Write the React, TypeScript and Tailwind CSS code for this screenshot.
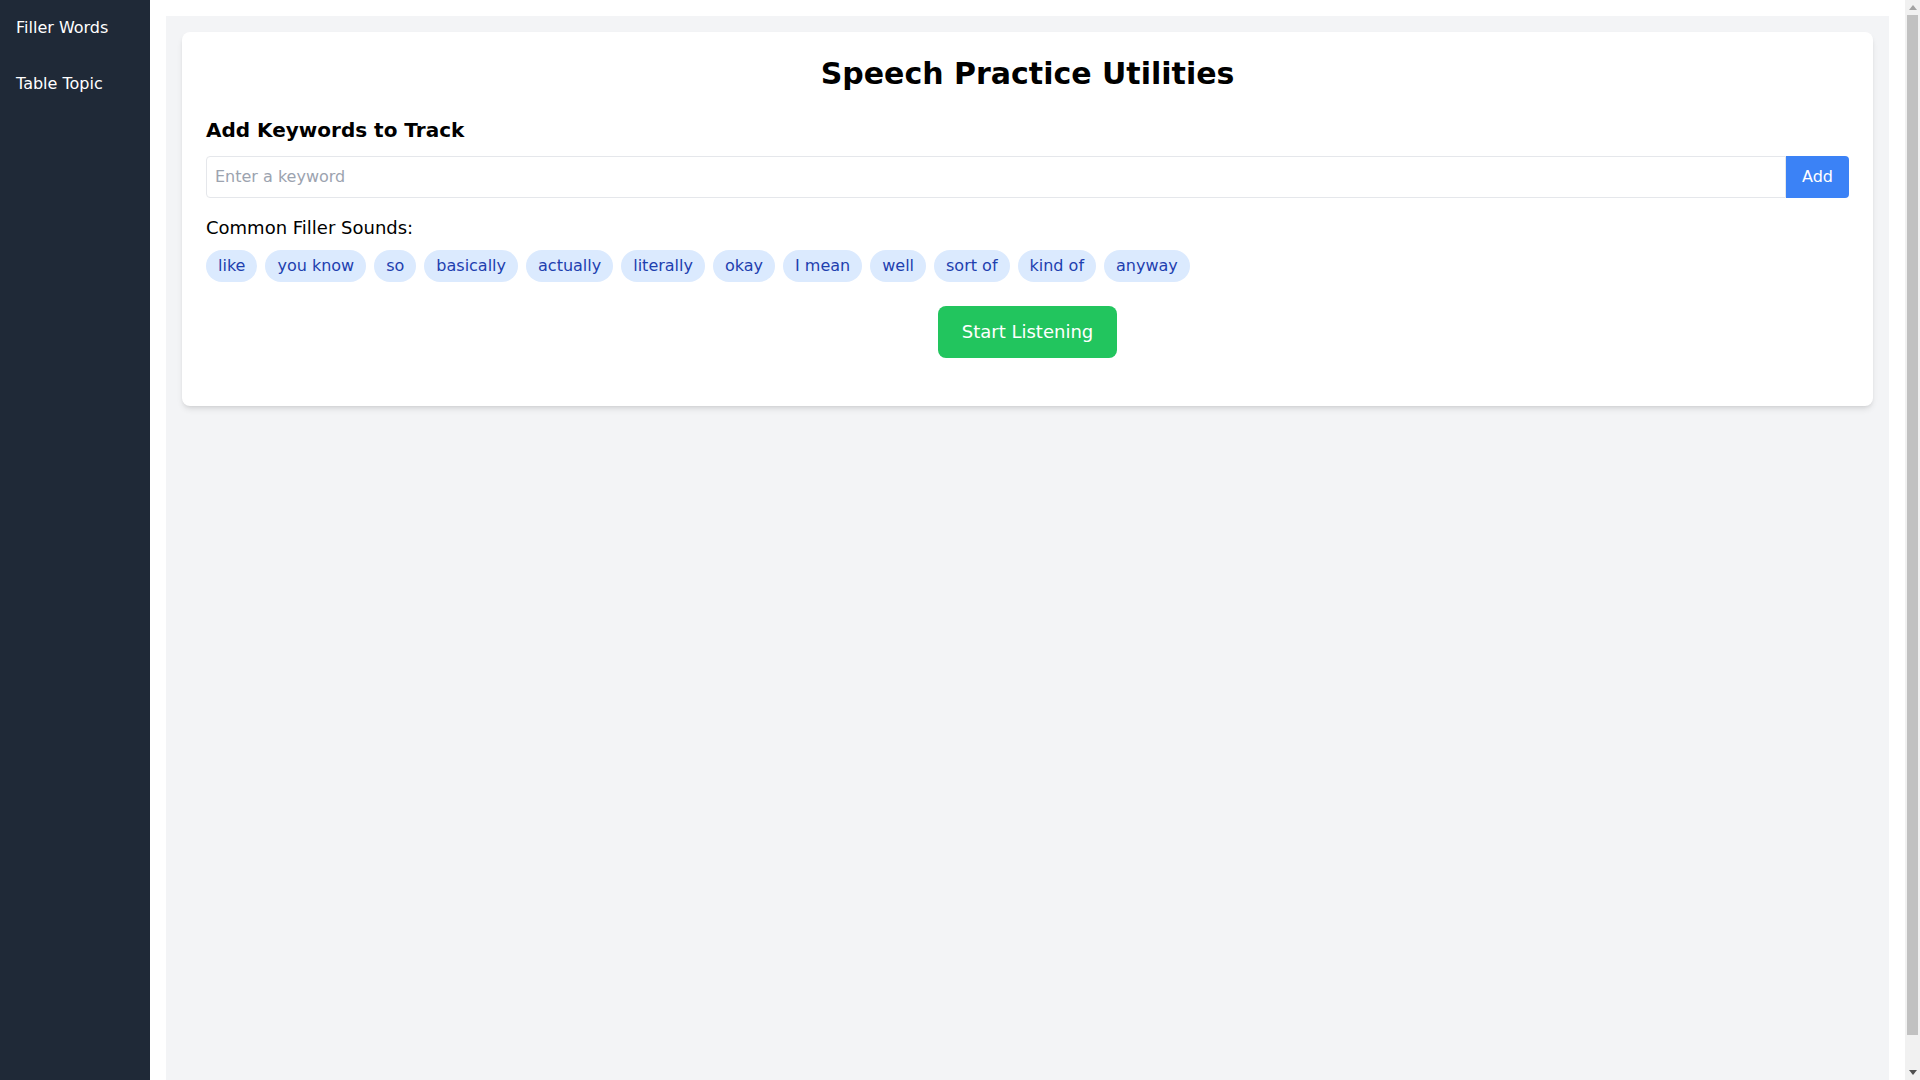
import React from "react";

const fillers = ["like", "you know", "so", "basically", "actually", "literally", "okay", "I mean", "well", "sort of", "kind of", "anyway"];

function FakeScrollbar() {
  return (
    <div className="fixed right-0 top-0 flex h-screen w-[15px] flex-col items-center bg-[#f1f1f1]">
      <div className="flex h-[15px] w-full items-center justify-center">
        <svg width="8" height="5" viewBox="0 0 8 5">
          <path d="M0 5 L4 0 L8 5 Z" fill="#a3a3a3" />
        </svg>
      </div>
      <div className="h-[1020px] w-[11px] bg-[#c1c1c1]" />
      <div className="flex-1" />
      <div className="flex h-[15px] w-full items-center justify-center">
        <svg width="8" height="5" viewBox="0 0 8 5">
          <path d="M0 0 L8 0 L4 5 Z" fill="#505050" />
        </svg>
      </div>
    </div>
  );
}

export default function App() {
  return (
    <div className="flex min-h-screen bg-white pr-[15px] text-black" style={{ fontFamily: '"DejaVu Sans", sans-serif' }}>
      <aside className="w-[150px] shrink-0 bg-[#1f2937] text-white">
        <nav className="flex flex-col">
          <a className="block px-4 py-4 text-base">Filler Words</a>
          <a className="block px-4 py-4 text-base">Table Topic</a>
        </nav>
      </aside>
      <main className="flex-1 p-4">
        <div className="min-h-screen bg-[#f3f4f6] p-4">
          <div className="rounded-lg bg-white p-6 shadow-md">
            <h1 className="mb-6 text-center text-3xl font-bold">Speech Practice Utilities</h1>
            <h2 className="mb-3 text-xl font-bold">Add Keywords to Track</h2>
            <div className="flex">
              <input
                type="text"
                placeholder="Enter a keyword"
                className="flex-1 rounded-l border border-[#e5e7eb] p-2 text-base outline-none placeholder:text-[#9ca3af]"
              />
              <button className="rounded-r bg-[#3b82f6] px-4 text-base text-white">Add</button>
            </div>
            <p className="mt-4 text-lg">Common Filler Sounds:</p>
            <div className="mt-2 flex flex-wrap gap-2">
              {fillers.map((f) => (
                <span key={f} className="rounded-full bg-[#dbeafe] px-3 py-1 text-base text-[#1e40af]">
                  {f}
                </span>
              ))}
            </div>
            <div className="mb-6 mt-6 flex justify-center">
              <button className="rounded-lg bg-[#22c55e] px-6 py-3 text-lg text-white">Start Listening</button>
            </div>
          </div>
        </div>
      </main>
      <FakeScrollbar />
    </div>
  );
}
